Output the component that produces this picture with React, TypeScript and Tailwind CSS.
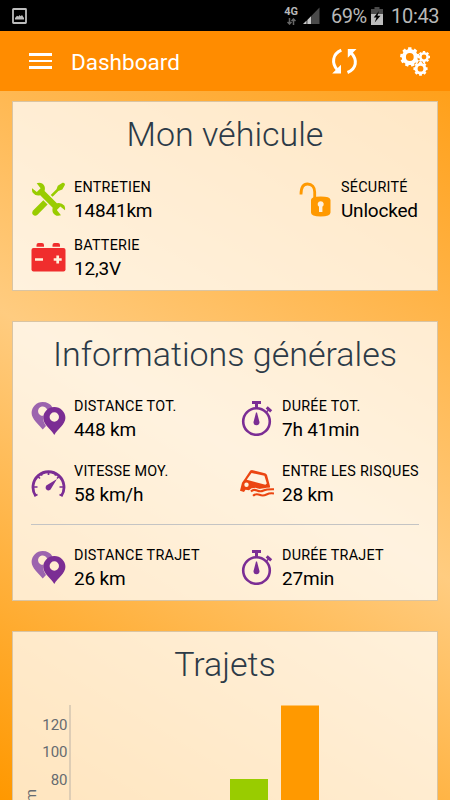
import type { ReactNode } from 'react';

function gearPath(cx: number, cy: number, outer: number, inner: number, hole: number, teeth: number): string {
  const pts: string[] = [];
  const step = (Math.PI * 2) / teeth;
  for (let i = 0; i < teeth; i++) {
    const a = i * step - Math.PI / 2;
    const add = (r: number, t: number) =>
      pts.push(`${(cx + r * Math.cos(a + t * step)).toFixed(2)} ${(cy + r * Math.sin(a + t * step)).toFixed(2)}`);
    add(inner, -0.32);
    add(outer, -0.24);
    add(outer, 0.24);
    add(inner, 0.32);
  }
  return `M${pts.join('L')}ZM${cx + hole} ${cy}a${hole} ${hole} 0 1 0 ${-2 * hole} 0a${hole} ${hole} 0 1 0 ${2 * hole} 0Z`;
}

const PictureIcon = () => (
  <svg width="15" height="16" viewBox="0 0 15 16">
    <rect x="1" y="1" width="13" height="14" rx="0.5" fill="none" stroke="#bdbdbd" strokeWidth="1.8" />
    <path d="M3 11.5V10l2-2.200 1.500.8L7.500 7l1.200 1.200L10 7l2 3v1.500Z" fill="#bdbdbd" />
  </svg>
);

const SignalIcon = () => (
  <svg width="17" height="17" viewBox="0 0 17 17">
    <path d="M8.500 8.700 16.500 0.500V17H8.500Z" fill="#4a4a4a" />
    <path d="M0 17 3.600 13.500V17ZM4.300 17V13L8.200 9V17Z" fill="#c8c8c8" />
  </svg>
);

const PhoneBatteryIcon = () => (
  <svg width="12" height="18" viewBox="0 0 12 18">
    <path d="M3.500 0H8.500V2H12V7H0V2H3.500Z" fill="#4a4a4a" />
    <path d="M0 7H12V18H0Z" fill="#bdbdbd" />
    <path d="M8 4 2.700 10.500H5.500L3.700 15.500 9.500 8.700H6.500Z" fill="#000" />
  </svg>
);

const RefreshIcon = () => (
  <svg width="27" height="27" viewBox="0 0 27 27" fill="none" stroke="#fff" strokeWidth="3">
    <path d="M10.300 2.200C1.500 6 .2 15 6.500 22" />
    <path d="M16.500 24.500C25.500 21 26.800 12 20.300 5" />
    <path d="M1.200 25.500H10V16.800ZM16.800 1H25.500L16.800 9.800Z" fill="#fff" stroke="none" />
  </svg>
);

const GearsIcon = () => (
  <svg width="31" height="30" viewBox="0 0 31 30" fill="#fff" fillRule="evenodd">
    <path d={gearPath(9.8, 10, 9.800, 8, 3.900, 9)} />
    <path d={gearPath(24, 10, 6.100, 4.800, 2.400, 8)} />
    <path d={gearPath(20.500, 21.700, 7.200, 5.800, 2.900, 8)} />
  </svg>
);

const ToolsIcon = () => (
  <svg width="35" height="35" viewBox="0 0 35 35" fill="#99cc00">
    <path d="M19.700 13.100 25.500 7.300 26.800 3.700 31.500.8Q33.800.2 34 2.700L31.300 7.600 27.400 9 21.600 14.800Z" />
    <path d="M12.300 18.300 16.600 22.500 6.500 32.700Q4.200 34.600 2 32.800.2 30.700 2.300 28.200Z" />
    <path d="M5.700 1.200Q11-.3 13.400 4 14.300 6 13.600 8.900L25.900 21.200Q30.500 20.200 33.300 23.600 34.400 25.600 34 28.200L29.300 24.500 25.800 28 30 33.300Q24.500 35 22 30.700 21 28.600 21.700 25.800L9.200 13.300Q4.500 14.400 1.800 10.800.7 8.900 1.100 6.300L5.800 10 9.600 6.300Z" />
  </svg>
);

const CarBatteryIcon = () => (
  <svg width="35" height="35" viewBox="0 0 35 35">
    <path d="M5.500 6.800V5Q5.500 3 7.500 3H11Q13 3 13 5V6.800ZM21.500 6.800V5Q21.500 3 23.500 3H27Q29 3 29 5V6.800Z" fill="#f02d2d" />
    <rect x=".5" y="8" width="34" height="23.500" rx="2" fill="#f02d2d" />
    <path d="M4 19.500H12M22.700 19.500H30.700M26.700 15.500V23.500" stroke="#fff1dc" strokeWidth="2.700" />
  </svg>
);

const UnlockIcon = () => (
  <svg width="35" height="35" viewBox="0 0 35 35">
    <path d="M3 12.500C3 5 5.500 2 9.500 2C14 2 16.700 5 16.700 10V16" fill="none" stroke="#ff9900" strokeWidth="2.800" />
    <path d="M13 18Q13 14.600 22.700 14.600T32.500 18V30.500Q32.500 34.500 22.700 34.500T13 30.500Z" fill="#ff9900" />
    <path d="M22.700 19.200a3 3 0 0 1 1.700 5.500V30h-3.400V24.700a3 3 0 0 1 1.700-5.500Z" fill="#fff1dc" />
  </svg>
);

const PinsIcon = () => (
  <svg width="35" height="35" viewBox="0 0 35 35" fillRule="evenodd">
    <path d="M11.700 1A11 11 0 0 0 .6 12C.6 18 7.500 23 11.700 28.500L15 25Q10.500 18 12.500 14.800A4.700 4.700 0 1 1 16.300 9L21.500 6.500Q18.500 1 11.700 1Z" fill="#9c64ae" />
    <path d="M23.300 6A11 11 0 0 1 34.400 17C34.400 23.500 26.500 28 23.300 34C20 28 12.200 23.500 12.200 17A11 11 0 0 1 23.300 6ZM28 16a4.700 4.700 0 1 0-9.400 0a4.700 4.700 0 1 0 9.400 0Z" fill="#7b2d94" />
  </svg>
);

const StopwatchIcon = () => (
  <svg width="35" height="35" viewBox="-1.500 0 35 35" fill="#7b2d94">
    <circle cx="16" cy="20.500" r="13.300" fill="none" stroke="#7b2d94" strokeWidth="2.600" />
    <path d="M11.500 0H20.500V3H17.500V7.500H14.500V3H11.500ZM15.500 11.500H16.500L18.700 20A3 3 0 1 1 13.300 20Z" />
    <path d="M26.200 6.300 30.700 10.300" stroke="#7b2d94" strokeWidth="3" />
    <path d="M26 11 28 9" stroke="#7b2d94" strokeWidth="1.500" />
  </svg>
);

const SpeedIcon = () => (
  <svg width="35" height="35" viewBox="0 0 35 35">
    <path d="M4.700 30A15.500 15.500 0 1 1 30.300 30" fill="none" stroke="#7b2d94" strokeWidth="2.800" />
    <path d="M17.500 5V9M6.500 10 9 12.500M3 21H6.500M28.500 21H32M9.500 7 11.200 9.500M25.500 7 23.800 9.500M28.500 10 26 12.500M3.500 30 6.500 28.500M31.500 30 28.500 28.500" stroke="#7b2d94" strokeWidth="1.700" />
    <path d="M26 13 20.300 22.300A2.900 2.900 0 1 1 16.500 18.800Z" fill="#7b2d94" />
  </svg>
);

const FloodedCarIcon = () => (
  <svg width="35" height="35" viewBox="-.5 0 35 35">
    <path fillRule="evenodd" fill="#eb4511" d="M10.800 4.400Q12 3.800 13.500 4.200L25.500 7.200Q27 7.700 27.500 9L30.600 20.500 29.800 23.400 12 22.300 9.500 24.300 6 23.800 4.500 26 .5 24.700 2.500 16.800 5.500 12.600ZM12 7 7.200 13.700 25.900 18.700 27.300 17.500 24.900 9.800ZM9.200 18.800a2.200 2.200 0 1 0-4.400 0a2.200 2.200 0 1 0 4.400 0Z" />
    <path d="M12 26.500Q14.500 23 17 24.200T23 24.500 34.500 23.500" fill="none" stroke="#fff1dc" strokeWidth="4" />
    <path d="M11.500 25.500Q14 23 17.500 24.500T24 24.500 34.500 23.200M13.500 29.800Q16.500 27.300 20 28.800T27 28.500 34.500 27.500" fill="none" stroke="#eb4511" strokeWidth="2.100" />
  </svg>
);

function Card({ title, className, children }: { title: string; className: string; children: ReactNode }) {
  return (
    <section className={`mx-[12px] w-[426px] shrink-0 border border-[#d9c4a3] bg-white/75 bg-clip-padding px-[18px] ${className}`}>
      <h2 className="mt-[11px] text-center text-[34px] leading-[42px] font-light whitespace-nowrap text-[#2c3a47]">{title}</h2>
      {children}
    </section>
  );
}

function Stat({ icon, label, value }: { icon: ReactNode; label: string; value: string }) {
  return (
    <div className="flex h-[46px] items-center gap-2">
      {icon}
      <div className="whitespace-nowrap text-black">
        <div className="text-[14.400px] leading-[23px] tracking-[0.24px]">{label}</div>
        <div className="text-[19px] leading-[23px] tracking-[-0.200px]">{value}</div>
      </div>
    </div>
  );
}

export default function App() {
  return (
    <div className="flex h-[800px] w-[450px] flex-col overflow-hidden font-['Roboto',sans-serif]">
      <div className="flex h-[31px] shrink-0 items-center bg-black pr-[11px] pl-[12px] text-[20px] text-[#b8b8b8]">
        <PictureIcon />
        <div className="mr-[5px] ml-auto flex flex-col items-center">
          <span className="text-[11px] leading-[11px] font-bold">4G</span>
          <svg width="9" height="7" viewBox="0 0 9 7" className="mt-px" fill="none" stroke="#666" strokeWidth="1.500">
            <path d="M2.500 0V6M.5 4 2.500 6 4.500 4M6.500 7V1M4.500 3 6.500 1 8.500 3" />
          </svg>
        </div>
        <SignalIcon />
        <span className="ml-[11px] w-[37px] tracking-[-0.500px] whitespace-nowrap">69%</span>
        <span className="ml-[3px]"><PhoneBatteryIcon /></span>
        <span className="ml-[8px] w-[48px] tracking-[-0.300px] whitespace-nowrap">10:43</span>
      </div>
      <header className="flex h-[60px] shrink-0 items-center bg-[#ff8c00] pr-[19px] pl-[29px] text-white">
        <div className="flex w-[23px] flex-col gap-[4px]">
          <span className="h-[2.500px] bg-white" />
          <span className="h-[2.500px] bg-white" />
          <span className="h-[2.500px] bg-white" />
        </div>
        <h1 className="mt-px ml-[19px] text-[22.500px] leading-[30px]">Dashboard</h1>
        <div className="mt-px ml-auto flex items-center gap-[42px]">
          <RefreshIcon />
          <GearsIcon />
        </div>
      </header>
      <main className="flex min-h-0 flex-1 flex-col gap-[30px] overflow-hidden bg-[linear-gradient(31deg,#ff9800,#ffcc80_50%,#ffa01a)] pt-[10px]">
        <Card title="Mon véhicule" className="h-[190px]">
          <div className="mt-[21px] grid grid-cols-[1fr_121px] gap-y-[12px]">
            <Stat icon={<ToolsIcon />} label="ENTRETIEN" value="14841km" />
            <Stat icon={<UnlockIcon />} label="SÉCURITÉ" value="Unlocked" />
            <Stat icon={<CarBatteryIcon />} label="BATTERIE" value="12,3V" />
          </div>
        </Card>
        <Card title="Informations générales" className="h-[280px]">
          <div className="mt-[20px] grid grid-cols-[1fr_180px] gap-y-[19px]">
            <Stat icon={<PinsIcon />} label="DISTANCE TOT." value="448 km" />
            <Stat icon={<StopwatchIcon />} label="DURÉE TOT." value="7h 41min" />
            <Stat icon={<SpeedIcon />} label="VITESSE MOY." value="58 km/h" />
            <Stat icon={<FloodedCarIcon />} label="ENTRE LES RISQUES" value="28 km" />
          </div>
          <hr className="mt-[18px] mb-[19px] border-t border-[#c4c4c4]" />
          <div className="grid grid-cols-[1fr_180px]">
            <Stat icon={<PinsIcon />} label="DISTANCE TRAJET" value="26 km" />
            <Stat icon={<StopwatchIcon />} label="DURÉE TRAJET" value="27min" />
          </div>
        </Card>
        <Card title="Trajets" className="h-[280px]">
          <svg width="388" height="180" viewBox="0 0 388 180" className="mt-[20px] overflow-visible">
            <path d="M39 0V180" stroke="#d3c5b1" strokeWidth="1.500" />
            <g fill="#666b70" fontSize="15" textAnchor="end">
              <text x="36.500" y="25">120</text>
              <text x="36.500" y="52">100</text>
              <text x="36.500" y="79.500">80</text>
              <text transform="translate(5 84) rotate(-90)">km</text>
            </g>
            <rect x="199" y="74" width="38" height="106" fill="#99cc00" />
            <rect x="250" y="0.500" width="38" height="180" fill="#ff9900" />
          </svg>
        </Card>
      </main>
    </div>
  );
}
